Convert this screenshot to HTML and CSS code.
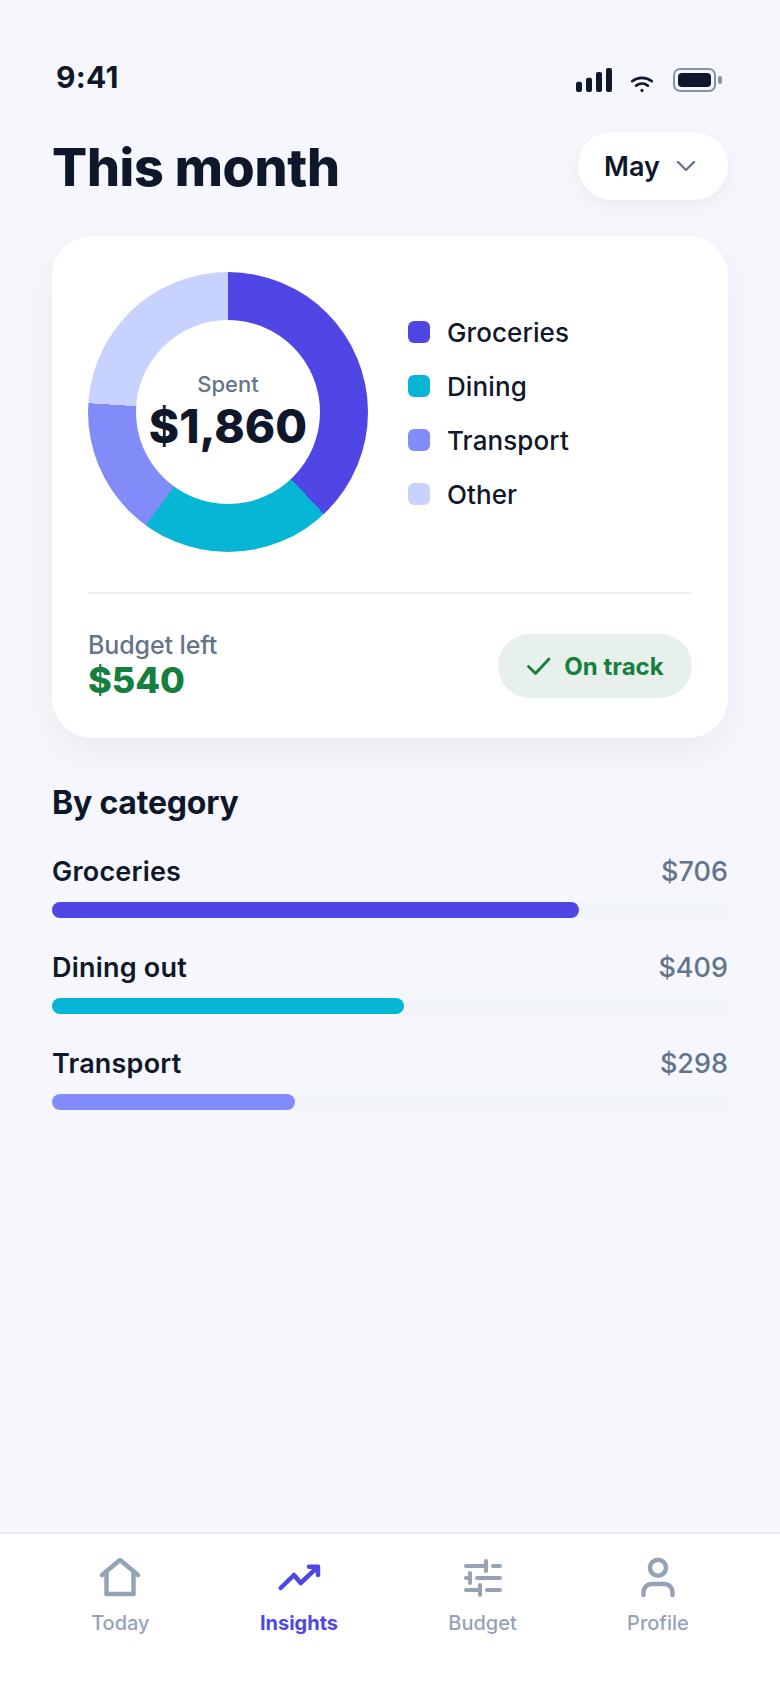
FILE: index.html
```html
<!DOCTYPE html>
<html lang="en">
<head>
    <meta charset="UTF-8">
    <title>This month</title>
    <link rel="stylesheet" href="styles.css">
</head>
<body>
<div class="screen">
    <main class="content">
        <div class="status-bar">
            <span class="time">9:41</span>
            <div class="status-icons">
                <svg class="signal" width="36" height="24" viewBox="0 0 36 24">
                    <rect x="0" y="13.7" width="6" height="10.3" rx="2"/>
                    <rect x="10" y="9.7" width="6" height="14.3" rx="2"/>
                    <rect x="20" y="4" width="6" height="20" rx="2"/>
                    <rect x="30" y="0" width="6" height="24" rx="2"/>
                </svg>
                <svg class="wifi" width="22" height="16" viewBox="0 0 22 16">
                    <path d="M1.2 5.2C6.8 .8 15.2 .8 20.8 5.2M5.2 9.6c3.4-2.600 8.200-2.600 11.600 0" fill="none" stroke="#0f172a" stroke-width="2.600" stroke-linecap="round"/>
                    <circle cx="11" cy="14.400" r="1.600" fill="#0f172a"/>
                </svg>
                <div class="battery"><div class="battery-level"></div></div>
                <div class="battery-nub"></div>
            </div>
        </div>

        <header class="page-head">
            <h1>This month</h1>
            <div class="month-picker">
                <span>May</span>
                <svg width="20" height="12" viewBox="0 0 20 12"><path d="M2 2l8 8 8-8" fill="none" stroke="#64748b" stroke-width="2.400" stroke-linecap="round" stroke-linejoin="round"/></svg>
            </div>
        </header>

        <section class="card">
            <div class="chart-row">
                <div class="donut">
                    <div class="donut-hole">
                        <span class="donut-label">Spent</span>
                        <span class="donut-value">$1,860</span>
                    </div>
                </div>
                <ul class="legend">
                    <li><i class="swatch indigo"></i>Groceries</li>
                    <li><i class="swatch cyan"></i>Dining</li>
                    <li><i class="swatch periwinkle"></i>Transport</li>
                    <li><i class="swatch pale"></i>Other</li>
                </ul>
            </div>
            <div class="card-foot">
                <div>
                    <div class="budget-label">Budget left</div>
                    <div class="budget-value">$540</div>
                </div>
                <div class="badge">
                    <svg width="26" height="20" viewBox="0 0 26 20"><path d="M2.500 10.500l7 7L23 3" fill="none" stroke="#15803d" stroke-width="2.800" stroke-linecap="round" stroke-linejoin="round"/></svg>
                    <span>On track</span>
                </div>
            </div>
        </section>

        <h2>By category</h2>
        <div class="categories">
            <div class="category">
                <div class="category-head"><span>Groceries</span><span class="amount">$706</span></div>
                <div class="track"><div class="fill indigo" style="width: 78%"></div></div>
            </div>
            <div class="category">
                <div class="category-head"><span>Dining out</span><span class="amount">$409</span></div>
                <div class="track"><div class="fill cyan" style="width: 52%"></div></div>
            </div>
            <div class="category">
                <div class="category-head"><span>Transport</span><span class="amount">$298</span></div>
                <div class="track"><div class="fill periwinkle" style="width: 36%"></div></div>
            </div>
        </div>
    </main>

    <nav class="tabbar">
        <a class="tab">
            <svg width="44" height="44" viewBox="0 0 44 44"><path d="M4 20L22 5l18 15M8.500 17v22h27V17" fill="none" stroke="currentColor" stroke-width="4.500" stroke-linecap="round" stroke-linejoin="round"/></svg>
            <span>Today</span>
        </a>
        <a class="tab active">
            <svg width="44" height="44" viewBox="0 0 44 44"><path d="M3.700 33L17 20l6.700 8L40 12.700M32 11.700h9V20" fill="none" stroke="currentColor" stroke-width="4.500" stroke-linecap="round" stroke-linejoin="round"/></svg>
            <span>Insights</span>
        </a>
        <a class="tab">
            <svg width="44" height="44" viewBox="0 0 44 44"><path d="M5 11h20M25 6v10M32 11h7M5 23h3M9 18v10M16 23h23M5 35h14M19 30v10M26 35h13" fill="none" stroke="currentColor" stroke-width="4" stroke-linecap="round"/></svg>
            <span>Budget</span>
        </a>
        <a class="tab">
            <svg width="44" height="44" viewBox="0 0 44 44"><circle cx="22" cy="12.700" r="8" fill="none" stroke="currentColor" stroke-width="4.500"/><path d="M7.500 40v-3a8 8 0 0 1 8-8h13a8 8 0 0 1 8 8v3" fill="none" stroke="currentColor" stroke-width="4.500" stroke-linecap="round"/></svg>
            <span>Profile</span>
        </a>
    </nav>
</div>
</body>
</html>
```

FILE: styles.css
```css
* {
    box-sizing: border-box;
}
body {
    margin: 0;
    background-color: #f5f7fc;
    color: #0f172a;
    font-family: Inter, "Liberation Sans", sans-serif;
}
.screen {
    width: 780px;
    height: 1688px;
    display: flex;
    flex-direction: column;
}
.content {
    flex: 1;
    padding: 0 52px;
}

/* status bar */
.status-bar {
    height: 132px;
    padding: 60px 6px 0 4px;
    display: flex;
    justify-content: space-between;
    align-items: flex-start;
}
.time {
    font-size: 30px;
    font-weight: 700;
    line-height: 34px;
    letter-spacing: 0.3px;
}
.status-icons {
    display: flex;
    align-items: center;
    margin-top: 8px;
}
.signal {
    fill: #0f172a;
    margin-right: 19px;
}
.wifi {
    margin-top: 8px;
    margin-right: 20px;
}
.battery {
    width: 43px;
    height: 24px;
    padding: 3px;
    border: 2px solid #8593a6;
    border-radius: 7px;
}
.battery-level {
    height: 100%;
    background-color: #0f172a;
    border-radius: 4px;
}
.battery-nub {
    width: 4px;
    height: 8px;
    margin-left: 2px;
    background-color: #8593a6;
    border-radius: 2px;
}

/* title row */
.page-head {
    display: flex;
    justify-content: space-between;
    align-items: center;
    margin-bottom: 36px;
}
h1 {
    margin: 2px 0 0;
    font-size: 52px;
    font-weight: 800;
    letter-spacing: -0.3px;
}
.month-picker {
    width: 150px;
    height: 68px;
    padding-left: 26px;
    display: flex;
    align-items: center;
    gap: 16px;
    background-color: #fff;
    border-radius: 34px;
    box-shadow: 0 6px 16px rgba(15, 23, 42, 0.05);
    font-size: 27px;
    font-weight: 600;
}

/* main card */
.card {
    height: 502px;
    padding: 36px;
    background-color: #fff;
    border-radius: 40px;
    box-shadow: 0 14px 36px rgba(15, 23, 42, 0.05);
}
.chart-row {
    display: flex;
    align-items: center;
    gap: 40px;
    padding-bottom: 40px;
    border-bottom: 2px solid #eef2f6;
}
.donut {
    width: 280px;
    height: 280px;
    display: flex;
    align-items: center;
    justify-content: center;
    border-radius: 50%;
    background: conic-gradient(#4f46e5 0 38%, #06b6d4 38% 60%, #818cf8 60% 76%, #c7d2fe 76% 100%);
}
.donut-hole {
    width: 184px;
    height: 184px;
    display: flex;
    flex-direction: column;
    align-items: center;
    justify-content: center;
    background-color: #fff;
    border-radius: 50%;
}
.donut-label {
    margin-bottom: 2px;
    font-size: 22px;
    font-weight: 500;
    line-height: 26px;
    color: #64748b;
}
.donut-value {
    font-size: 46px;
    font-weight: 800;
    line-height: 54px;
}
.legend {
    margin: 2px 0 0;
    padding: 0;
    list-style: none;
    display: flex;
    flex-direction: column;
    gap: 24px;
    font-size: 26px;
    font-weight: 500;
    letter-spacing: 0.1px;
}
.legend li {
    height: 30px;
    display: flex;
    align-items: center;
    gap: 17px;
}
.swatch {
    width: 22px;
    height: 22px;
    border-radius: 6px;
}
.indigo {
    background-color: #4f46e5;
}
.cyan {
    background-color: #06b6d4;
}
.periwinkle {
    background-color: #818cf8;
}
.pale {
    background-color: #c7d2fe;
}
.card-foot {
    display: flex;
    justify-content: space-between;
    align-items: center;
    padding-top: 37px;
}
.budget-label {
    font-size: 25px;
    font-weight: 500;
    line-height: 29px;
    letter-spacing: -0.1px;
    color: #64748b;
}
.budget-value {
    font-size: 36px;
    font-weight: 800;
    line-height: 41px;
    color: #15803d;
}
.badge {
    height: 64px;
    width: 194px;
    display: flex;
    align-items: center;
    justify-content: center;
    gap: 12px;
    background-color: #e8f0ec;
    border-radius: 32px;
    font-size: 24px;
    font-weight: 700;
    color: #15803d;
}

/* categories */
h2 {
    margin: 45px 0 33px;
    font-size: 32px;
    font-weight: 700;
    line-height: 40px;
    letter-spacing: -0.2px;
}
.categories {
    display: flex;
    flex-direction: column;
    gap: 34px;
}
.category {
    margin-top: -1px;
}
.category-head {
    display: flex;
    justify-content: space-between;
    margin-bottom: 14px;
    padding-top: 1px;
    height: 33px;
    font-size: 27px;
    font-weight: 600;
    line-height: 32px;
    letter-spacing: 0.2px;
}
.amount {
    font-weight: 500;
    letter-spacing: 0;
    color: #64748b;
}
.track {
    height: 16px;
    background-color: #f1f4f8;
    border-radius: 8px;
}
.fill {
    height: 100%;
    border-radius: 8px;
}

/* bottom nav */
.tabbar {
    height: 156px;
    padding: 21px 36px 0;
    display: flex;
    justify-content: space-around;
    align-items: flex-start;
    background-color: #fff;
    border-top: 2px solid #e8edf2;
}
.tab {
    display: flex;
    flex-direction: column;
    align-items: center;
    gap: 10px;
    font-size: 20px;
    font-weight: 500;
    line-height: 28px;
    color: #94a3b8;
}
.tab.active {
    font-weight: 700;
    color: #4f46e5;
}
```
